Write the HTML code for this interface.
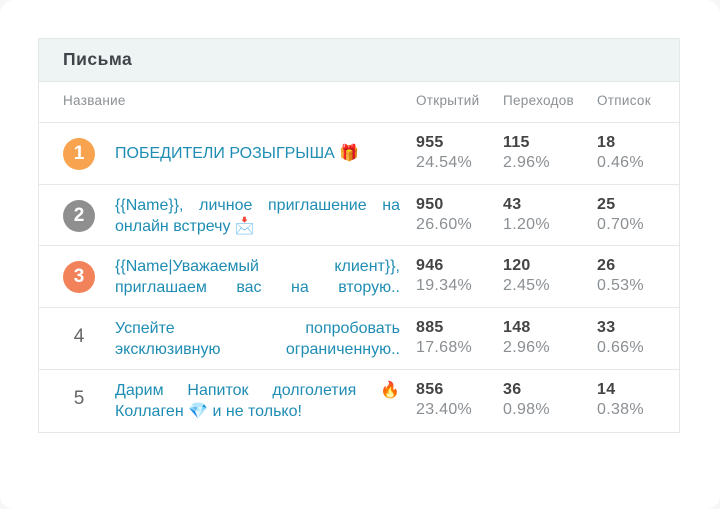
<!DOCTYPE html>
<html><head><meta charset="utf-8"><style>
*{margin:0;padding:0;box-sizing:border-box}
body{width:720px;height:509px;background:#f7f7f7;font-family:"Liberation Sans","DejaVu Sans",sans-serif;position:relative;overflow:hidden}
.page{position:absolute;left:0;top:0;width:720px;height:509px;background:#fff;border-radius:14px}
.card{position:absolute;left:38px;top:38px;width:642px;height:395px;border:1px solid #e4e8e8;background:#fff}
.head{position:absolute;left:0;top:0;width:640px;height:43px;background:#eef3f3;border-bottom:1px solid #e2e6e6}
.head span{position:absolute;left:24px;top:10px;font-size:17.5px;letter-spacing:0.5px;font-weight:bold;color:#3e4448}
.th{position:absolute;top:54px;font-size:13.5px;letter-spacing:0.3px;color:#8a9094}
.row{position:absolute;left:0;width:640px;height:62px;border-top:1px solid #e6e9ea}
.badge{position:absolute;left:24px;top:15px;width:32px;height:32px;border-radius:50%;color:#fff;font-weight:bold;font-size:19px;text-align:center;line-height:32px}
.num{position:absolute;left:24px;width:32px;top:18px;text-align:center;font-size:19px;color:#666}
.title{position:absolute;left:76px;width:285px;font-size:16px;line-height:21px;color:#1f8db3;text-align:justify;text-align-last:justify;white-space:nowrap}
.title.one{text-align-last:left}
.st{position:absolute;top:10px;font-size:16px;line-height:20px;letter-spacing:0.3px}
.st b{display:block;color:#444}
.st i{display:block;font-style:normal;color:#8a8f93}
</style></head><body><div class="page">
<div class="card">
<div class="head"><span>Письма</span></div>
<div class="th" style="left:24px">Название</div>
<div class="th" style="left:377px">Открытий</div>
<div class="th" style="left:464px">Переходов</div>
<div class="th" style="left:558px">Отписок</div>

<div class="row" style="top:83px">
<div class="badge" style="background:#f7a34f">1</div>
<div class="title one" style="top:20px">ПОБЕДИТЕЛИ РОЗЫГРЫША 🎁</div>
<div class="st" style="left:377px"><b>955</b><i>24.54%</i></div>
<div class="st" style="left:464px"><b>115</b><i>2.96%</i></div>
<div class="st" style="left:558px"><b>18</b><i>0.46%</i></div>
</div>

<div class="row" style="top:145px">
<div class="badge" style="background:#8f8f8f">2</div>
<div class="title" style="top:10px">{{Name}}, личное приглашение на</div>
<div class="title one" style="top:31px">онлайн встречу 📩</div>
<div class="st" style="left:377px"><b>950</b><i>26.60%</i></div>
<div class="st" style="left:464px"><b>43</b><i>1.20%</i></div>
<div class="st" style="left:558px"><b>25</b><i>0.70%</i></div>
</div>

<div class="row" style="top:206px">
<div class="badge" style="background:#f28259">3</div>
<div class="title" style="top:10px">{{Name|Уважаемый клиент}},</div>
<div class="title" style="top:31px">приглашаем вас на вторую..</div>
<div class="st" style="left:377px"><b>946</b><i>19.34%</i></div>
<div class="st" style="left:464px"><b>120</b><i>2.45%</i></div>
<div class="st" style="left:558px"><b>26</b><i>0.53%</i></div>
</div>

<div class="row" style="top:268px">
<div class="num">4</div>
<div class="title" style="top:10px">Успейте попробовать</div>
<div class="title" style="top:31px">эксклюзивную ограниченную..</div>
<div class="st" style="left:377px"><b>885</b><i>17.68%</i></div>
<div class="st" style="left:464px"><b>148</b><i>2.96%</i></div>
<div class="st" style="left:558px"><b>33</b><i>0.66%</i></div>
</div>

<div class="row" style="top:330px">
<div class="num">5</div>
<div class="title" style="top:10px">Дарим Напиток долголетия 🔥</div>
<div class="title one" style="top:31px">Коллаген 💎 и не только!</div>
<div class="st" style="left:377px"><b>856</b><i>23.40%</i></div>
<div class="st" style="left:464px"><b>36</b><i>0.98%</i></div>
<div class="st" style="left:558px"><b>14</b><i>0.38%</i></div>
</div>
</div>
</div></body></html>
